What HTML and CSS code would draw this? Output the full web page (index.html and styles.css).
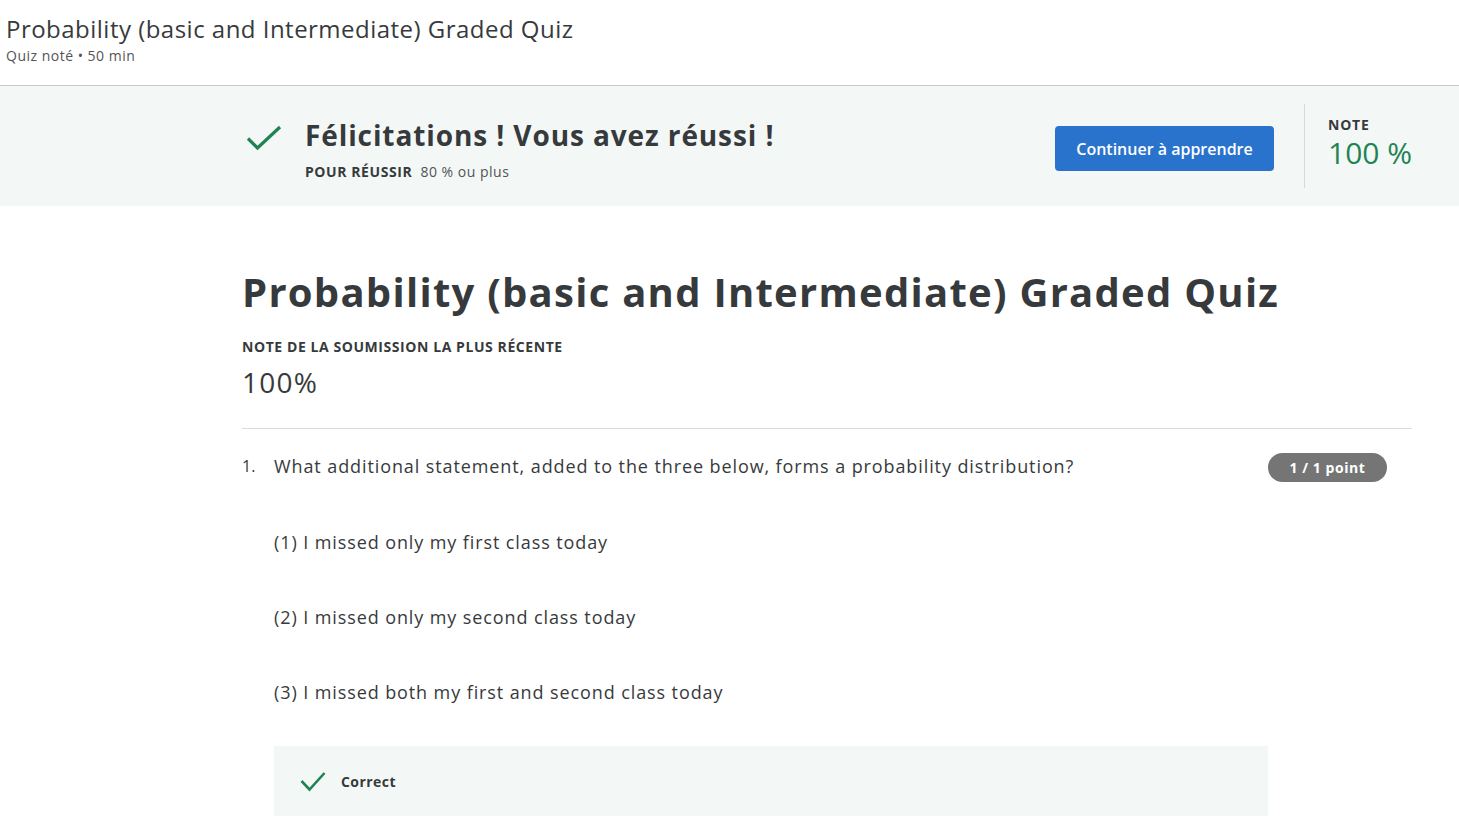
FILE: index.html
```html
<!DOCTYPE html>
<html lang="fr">
<head>
<meta charset="utf-8">
<title>Probability (basic and Intermediate) Graded Quiz</title>
<link rel="stylesheet" href="styles.css">
</head>
<body>
<header class="top">
  <h1 class="top-title">Probability (basic and Intermediate) Graded Quiz</h1>
  <div class="top-sub">Quiz noté • 50 min</div>
</header>

<section class="banner">
  <div class="banner-left">
    <svg class="banner-check" width="36" height="26" viewBox="0 0 36 26" aria-hidden="true">
      <path d="M2 13.5 L11.5 23 L34 2" fill="none" stroke="#1f8354" stroke-width="3.2"/>
    </svg>
    <div class="banner-text">
      <div class="banner-title">Félicitations ! Vous avez réussi !</div>
      <div class="banner-req"><span class="req-label">POUR RÉUSSIR</span> 80 % ou plus</div>
    </div>
  </div>
  <button class="btn-continue">Continuer à apprendre</button>
  <div class="banner-grade">
    <div class="grade-label">NOTE</div>
    <div class="grade-value">100 %</div>
  </div>
</section>

<main class="content">
  <h2 class="quiz-title">Probability (basic and Intermediate) Graded Quiz</h2>
  <div class="recent-label">NOTE DE LA SOUMISSION LA PLUS RÉCENTE</div>
  <div class="recent-value">100%</div>
  <hr class="divider">

  <div class="question">
    <div class="q-num">1.</div>
    <div class="q-body">
      <p class="q-text">What additional statement, added to the three below, forms a probability distribution?</p>
      <p class="q-line">(1) I missed only my first class today</p>
      <p class="q-line">(2) I missed only my second class today</p>
      <p class="q-line">(3) I missed both my first and second class today</p>
      <div class="feedback">
        <svg class="fb-check" width="26" height="22" viewBox="0 0 26 22" aria-hidden="true">
          <path d="M1.5 11 L9.5 19.5 L24.5 3" fill="none" stroke="#1f8354" stroke-width="2.6"/>
        </svg>
        <span class="fb-text">Correct</span>
      </div>
    </div>
    <div class="q-score"><span class="pill">1 / 1 point</span></div>
  </div>
</main>
</body>
</html>
```

FILE: styles.css
```css
* { box-sizing: border-box; }

html, body {
  margin: 0;
  padding: 0;
  background: #ffffff;
  font-family: "Open Sans", "Noto Sans", "Liberation Sans", sans-serif;
  color: #373a3c;
}

.top {
  padding: 14px 6px 19px;
  border-bottom: 1px solid #c9c9c9;
}

.top-title {
  margin: 0;
  font-size: 24px;
  line-height: 30px;
  font-weight: 400;
  letter-spacing: 0.48px;
  color: #373a3c;
}

.top-sub {
  margin-top: 2px;
  font-size: 14px;
  line-height: 20px;
  letter-spacing: 0.5px;
  color: #545454;
}

.banner {
  height: 120px;
  background: #f3f8f6;
  display: flex;
  align-items: center;
  padding-left: 246px;
}

.banner-left {
  display: flex;
  align-items: flex-start;
  width: 809px;
  padding-top: 6px;
}

.banner-check {
  margin-top: 8px;
  flex: none;
}

.banner-text {
  margin-left: 23px;
}

.banner-title {
  font-size: 28px;
  line-height: 36px;
  font-weight: 700;
  letter-spacing: 0.9px;
  color: #373a3c;
}

.banner-req {
  margin-top: 9px;
  font-size: 14px;
  line-height: 20px;
  letter-spacing: 0.5px;
  color: #545454;
}

.req-label {
  font-weight: 700;
  letter-spacing: 0.58px;
  color: #373a3c;
  margin-right: 4px;
}

.btn-continue {
  margin-top: 5px;
  width: 219px;
  height: 45px;
  border: none;
  border-radius: 4px;
  background: #2a73cc;
  color: #ffffff;
  font-family: inherit;
  font-size: 16px;
  font-weight: 600;
  padding: 0;
}

.banner-grade {
  margin-left: 30px;
  height: 84px;
  border-left: 1px solid #d6d9d8;
  padding-left: 23px;
  padding-top: 12px;
}

.grade-label {
  font-size: 14px;
  line-height: 18px;
  font-weight: 700;
  letter-spacing: 0.75px;
  color: #373a3c;
}

.grade-value {
  margin-top: 3px;
  font-size: 30px;
  line-height: 32px;
  color: #1f8354;
}

.content {
  width: 1170px;
  margin-left: 242px;
  padding-top: 62px;
}

.quiz-title {
  margin: 0;
  font-size: 40px;
  line-height: 48px;
  font-weight: 700;
  letter-spacing: 1.27px;
  color: #373a3c;
}

.recent-label {
  margin-top: 21px;
  font-size: 14px;
  line-height: 20px;
  font-weight: 700;
  letter-spacing: 0.57px;
  color: #373a3c;
}

.recent-value {
  margin-top: 7px;
  font-size: 28px;
  line-height: 36px;
  font-weight: 400;
  letter-spacing: 1.2px;
  color: #373a3c;
}

.divider {
  margin: 28px 0 0;
  border: none;
  border-top: 1px solid #dcdcdc;
  height: 0;
}

.question {
  display: flex;
  align-items: flex-start;
  padding-top: 25px;
}

.q-num {
  width: 32px;
  flex: none;
  font-size: 16px;
  line-height: 24px;
  color: #373a3c;
}

.q-body {
  width: 994px;
  flex: none;
}

.q-text,
.q-line {
  margin: 0;
  font-size: 18px;
  line-height: 24px;
  letter-spacing: 0.9px;
  color: #373a3c;
}

.q-line {
  margin-top: 51px;
}

.q-text + .q-line {
  margin-top: 52px;
}

.feedback {
  margin-top: 42px;
  height: 70px;
  background: #f3f8f6;
  display: flex;
  align-items: center;
  padding-left: 26px;
}

.fb-check {
  flex: none;
}

.fb-text {
  margin-left: 15px;
  font-size: 14px;
  font-weight: 700;
  letter-spacing: 0.45px;
  color: #373a3c;
}

.q-score {
  flex: none;
  margin-top: -1px;
}

.pill {
  display: inline-block;
  width: 119px;
  height: 29px;
  border-radius: 15px;
  background: #757575;
  color: #ffffff;
  font-size: 14px;
  line-height: 29px;
  font-weight: 700;
  letter-spacing: 0.55px;
  text-align: center;
}
```
